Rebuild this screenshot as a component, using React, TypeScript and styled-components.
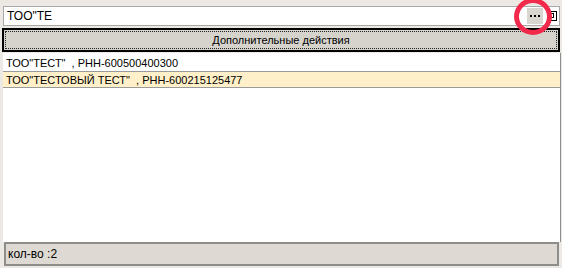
import styled, { createGlobalStyle } from "styled-components";

const Global = createGlobalStyle`
  html, body {
    margin: 0;
    padding: 0;
    background: #ece9e4;
  }
  body {
    font-family: "Liberation Sans", Arial, sans-serif;
    font-size: 11px;
    color: #000;
  }
`;

const Frame = styled.div`
  width: 562px;
  height: 268px;
  box-sizing: border-box;
  background: #ece9e4;
  display: flex;
  flex-direction: column;
  padding: 6px 1px 2px 3px;
`;

const SearchBox = styled.div`
  height: 20px;
  margin-right: 1px;
  box-sizing: border-box;
  border: 1px solid #a9a9a9;
  background: #fff;
  display: flex;
  align-items: center;
  padding: 0 2px 0 3px;
`;

const SearchText = styled.div`
  flex: 1;
  font-size: 12px;
  color: #000;
`;

const DotsButton = styled.div`
  width: 16px;
  height: 16px;
  margin-right: 4px;
  background: #d9d6cf;
  display: flex;
  align-items: center;
  justify-content: center;
  position: relative;
`;

const Ring = styled.div`
  position: absolute;
  left: -13px;
  top: -10px;
  width: 38px;
  height: 37px;
  border: 5px solid #f2294a;
  border-radius: 50%;
  box-sizing: border-box;
  pointer-events: none;
`;

const ActionButton = styled.div`
  margin: 2px 1px 1px -1px;
  height: 24px;
  box-sizing: border-box;
  border: 2px solid #000;
  background: #d6d3cc;
  padding: 1px;
  display: flex;
`;

const FocusRect = styled.div`
  flex: 1;
  border: 1px dotted #222;
  display: flex;
  align-items: center;
  justify-content: center;
  font-size: 11px;
`;

const ListPanel = styled.div`
  flex: 1;
  background: #fff;
  border-right: 1px solid #8d8d8d;
  padding-top: 1px;
  display: flex;
  flex-direction: column;
`;

const Row = styled.div<{ $selected?: boolean }>`
  height: 17px;
  box-sizing: border-box;
  padding-left: 3px;
  display: flex;
  align-items: center;
  white-space: pre;
  font-size: 11px;
  background: ${({ $selected }) => ($selected ? "#fff0c9" : "#fff")};
  border-top: 1px solid ${({ $selected }) => ($selected ? "#9a9a9a" : "transparent")};
  border-bottom: 1px solid ${({ $selected }) => ($selected ? "#9a9a9a" : "transparent")};
`;

const StatusBar = styled.div`
  height: 24px;
  box-sizing: border-box;
  margin-left: 1px;
  margin-right: 2px;
  border: 2px solid #8d8d8a;
  background: #dedad3;
  padding: 0 2px;
  display: flex;
  align-items: center;
  font-size: 12px;
`;

const rows = [
  { text: 'ТОО"ТЕСТ"  , РНН-600500400300', selected: false },
  { text: 'ТОО"ТЕСТОВЫЙ ТЕСТ"  , РНН-600215125477', selected: true },
];

const App = () => (
  <>
    <Global />
    <Frame>
      <SearchBox>
        <SearchText>ТОО"ТЕ</SearchText>
        <DotsButton>
          <svg width="10" height="3" viewBox="0 0 10 3">
            <rect x="0" y="0" width="2" height="2" fill="#000" />
            <rect x="4" y="0" width="2" height="2" fill="#000" />
            <rect x="8" y="0" width="2" height="2" fill="#000" />
          </svg>
          <Ring />
        </DotsButton>
        <svg width="10" height="10" viewBox="0 0 10 10">
          <rect x="0.5" y="0.5" width="9" height="9" fill="#fff" stroke="#000" />
          <rect x="2" y="2" width="5" height="5" fill="#000" />
          <rect x="3" y="3" width="3" height="3" fill="#fff" />
        </svg>
      </SearchBox>
      <ActionButton>
        <FocusRect>Дополнительные действия</FocusRect>
      </ActionButton>
      <ListPanel>
        {rows.map((r) => (
          <Row key={r.text} $selected={r.selected}>
            {r.text}
          </Row>
        ))}
      </ListPanel>
      <StatusBar>кол-во :2</StatusBar>
    </Frame>
  </>
);

export default App;
